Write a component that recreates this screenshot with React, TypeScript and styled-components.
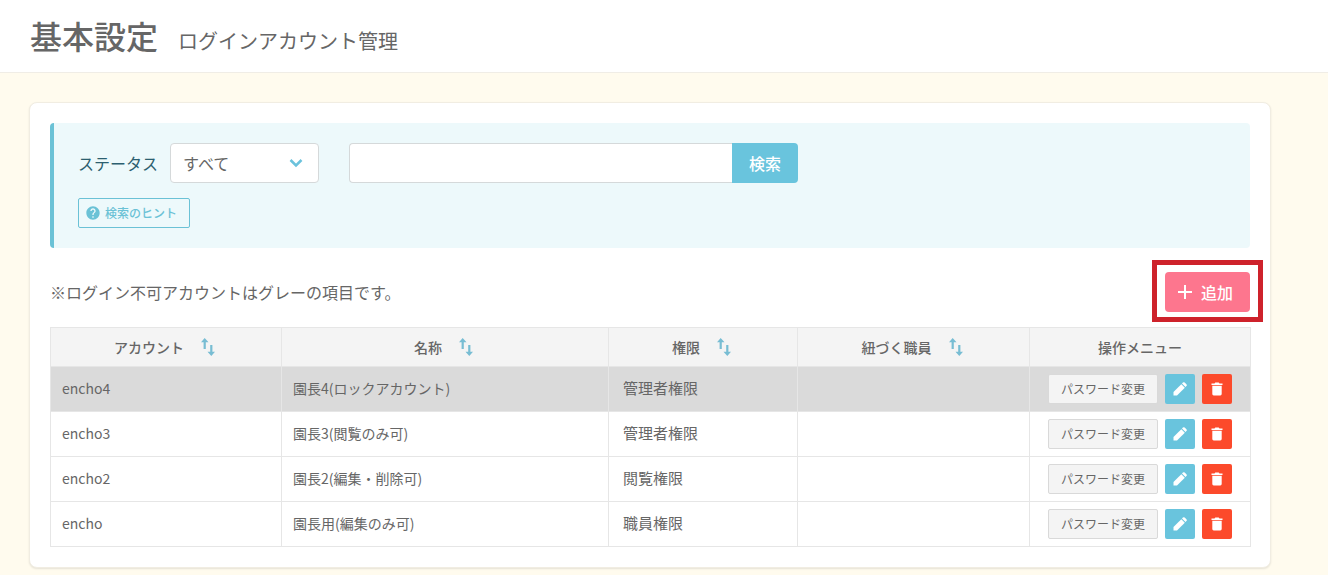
import React from "react";
import styled, { createGlobalStyle } from "styled-components";
import { MdHelp } from "react-icons/md";

const GlobalStyle = createGlobalStyle`
  *, *::before, *::after { box-sizing: border-box; }
  body {
    margin: 0;
    background: #fffbee;
    color: #666;
    font-family: "Noto Sans CJK JP", sans-serif;
    font-size: 16px;
    line-height: 24px;
  }
  button, input, select { font: inherit; color: inherit; margin: 0; }
  button { cursor: pointer; }
`;

const PageHeader = styled.header`
  display: flex;
  align-items: baseline;
  gap: 20px;
  padding: 11px 30px 13px;
  background: #fff;
  border-bottom: 1px solid #f0ede6;
`;

const Title = styled.h1`
  margin: 0;
  font-size: 32px;
  line-height: 48px;
  font-weight: 500;
`;

const Subtitle = styled.p`
  margin: 0;
  font-size: 20px;
`;

const Card = styled.main`
  max-width: 1242px;
  margin: 29px 29px 7px;
  padding: 20px;
  background: #fff;
  border: 1px solid #f1ede2;
  border-radius: 8px;
  box-shadow: 0 1px 2px rgba(0, 0, 0, 0.1);
`;

const SearchPanel = styled.form`
  display: flex;
  flex-direction: column;
  align-items: flex-start;
  gap: 15px;
  padding: 20px 24px;
  background: #edf9fb;
  border-left: 4px solid #6bc2d6;
  border-radius: 4px;
`;

const SearchRow = styled.div`
  display: flex;
  align-items: center;
`;

const StatusLabel = styled.label`
  margin-right: 12px;
  color: #2c5f70;
`;

const SelectBox = styled.div`
  display: grid;
  align-items: center;
  margin-right: 30px;

  > * { grid-area: 1 / 1; }

  svg {
    justify-self: end;
    margin-right: 16px;
    pointer-events: none;
  }
`;

const StatusSelect = styled.select`
  appearance: none;
  width: 149px;
  height: 40px;
  padding: 0 12px;
  background: #fff;
  border: 1px solid #d5d9da;
  border-radius: 4px;
`;

const KeywordInput = styled.input`
  width: 383px;
  height: 40px;
  padding: 0 12px;
  background: #fff;
  border: 1px solid #d5d9da;
  border-right: 0;
  border-radius: 4px 0 0 4px;
`;

const SearchButton = styled.button`
  width: 66px;
  height: 40px;
  padding: 0;
  border: 0;
  border-radius: 0 4px 4px 0;
  background: #69c4dd;
  color: #fff;
  font-weight: 500;
`;

const HintButton = styled.button`
  display: flex;
  align-items: center;
  gap: 4px;
  height: 30px;
  padding: 0 12px 0 6px;
  background: transparent;
  border: 1px solid #6bc2d6;
  border-radius: 2px;
  color: #6bc2d6;
  font-size: 12px;
  font-weight: 500;
`;

const NoteRow = styled.div`
  display: flex;
  align-items: center;
  justify-content: space-between;
  margin: 24px 0 15px;
`;

const Note = styled.p`
  margin: 0;
`;

const Highlight = styled.div`
  position: relative;

  &::after {
    content: "";
    position: absolute;
    inset: -12px -13px -10px;
    border: 5px solid #ce222b;
    pointer-events: none;
  }
`;

const AddButton = styled.button`
  display: flex;
  align-items: center;
  gap: 8px;
  height: 40px;
  padding: 0 17px 0 12px;
  border: 0;
  border-radius: 4px;
  background: #fd768e;
  color: #fff;
  font-weight: 500;
`;

const Table = styled.table`
  width: 100%;
  table-layout: fixed;
  border-collapse: collapse;
  font-size: 14px;
`;

const Column = styled.col<{ $width: number }>`
  width: ${({ $width }) => $width}px;
`;

const HeadCell = styled.th`
  height: 39px;
  padding: 0;
  background: #f4f4f4;
  border: 1px solid #e6e6e6;
  font-weight: 500;
`;

const HeadContent = styled.div`
  display: flex;
  align-items: center;
  justify-content: center;
  gap: 17px;
  padding-right: 3px;
`;

const SortButton = styled.button`
  display: flex;
  padding: 0;
  border: 0;
  background: none;
`;

const Row = styled.tr<{ $locked: boolean }>`
  background: ${({ $locked }) => ($locked ? "#dadada" : "#fff")};
`;

const Cell = styled.td`
  height: 45px;
  padding: 0 11px;
  border: 1px solid #e6e6e6;
`;

const TextCell = styled(Cell)`
  padding-bottom: 2px;
`;

const RoleCell = styled(TextCell)`
  padding-left: 14px;
  font-size: 15px;
`;

const Actions = styled.div`
  display: flex;
  justify-content: center;
  gap: 7px;
`;

const PasswordButton = styled.button`
  width: 110px;
  height: 30px;
  padding: 0;
  background: #f4f4f4;
  border: 1px solid #d9d9d9;
  border-radius: 2px;
  font-size: 12px;
`;

const IconButton = styled.button<{ $color: string }>`
  display: flex;
  align-items: center;
  justify-content: center;
  width: 30px;
  height: 30px;
  padding: 0;
  border: 0;
  border-radius: 2px;
  background: ${({ $color }) => $color};
  color: #fff;
`;

const SortIcon = () => (
  <svg width="14" height="18" viewBox="0 0 14 18" fill="#78bdd3" aria-hidden="true">
    <path d="M3.700 0 7.500 4.300H4.800V11H2.600V4.300H0Z" />
    <path d="M10.300 18 6.500 13.700H9.200V7H11.400V13.700H14Z" />
  </svg>
);

const ChevronIcon = () => (
  <svg width="14" height="10" viewBox="0 0 14 10" fill="none" stroke="#6bc2dc" strokeWidth="2.500" aria-hidden="true">
    <path d="m1.500 2 5.500 5.500L12.500 2" />
  </svg>
);

const PlusIcon = () => (
  <svg width="16" height="16" viewBox="0 0 16 16" stroke="#fff" strokeWidth="2" aria-hidden="true">
    <path d="M8 1v14M1 8h14" />
  </svg>
);

const PencilIcon = () => (
  <svg width="14" height="14" viewBox="0 0 14 14" fill="currentColor" aria-hidden="true">
    <path d="M.500 13.500V10L8.300 2.200l3.500 3.500L4 13.500Z" />
    <path d="m9 1.500.9-.9q.9-.9 1.800 0l1.700 1.700q.9.900 0 1.800l-.9.900Z" />
  </svg>
);

const TrashIcon = () => (
  <svg width="12" height="14" viewBox="0 0 12 14" fill="currentColor" aria-hidden="true">
    <path d="M.500 1.500H3.500L4.300.500H7.700L8.500 1.500H11.500V3H.500Z" />
    <path d="M1.300 3.800H10.700V12Q10.700 13.400 9.300 13.400H2.700Q1.300 13.400 1.300 12Z" />
  </svg>
);

const columns = [
  { label: "アカウント", width: 231 },
  { label: "名称", width: 327 },
  { label: "権限", width: 189 },
  { label: "紐づく職員", width: 232 },
];

const accounts = [
  { id: "encho4", name: "園長4(ロックアカウント)", role: "管理者権限", staff: "", locked: true },
  { id: "encho3", name: "園長3(閲覧のみ可)", role: "管理者権限", staff: "", locked: false },
  { id: "encho2", name: "園長2(編集・削除可)", role: "閲覧権限", staff: "", locked: false },
  { id: "encho", name: "園長用(編集のみ可)", role: "職員権限", staff: "", locked: false },
];

export default function App() {
  return (
    <>
      <GlobalStyle />
      <PageHeader>
        <Title>基本設定</Title>
        <Subtitle>ログインアカウント管理</Subtitle>
      </PageHeader>
      <Card>
        <SearchPanel onSubmit={(event) => event.preventDefault()}>
          <SearchRow>
            <StatusLabel htmlFor="status">ステータス</StatusLabel>
            <SelectBox>
              <StatusSelect id="status">
                <option>すべて</option>
              </StatusSelect>
              <ChevronIcon />
            </SelectBox>
            <KeywordInput type="text" aria-label="検索" />
            <SearchButton type="submit">検索</SearchButton>
          </SearchRow>
          <HintButton type="button">
            <MdHelp size={16} />
            検索のヒント
          </HintButton>
        </SearchPanel>
        <NoteRow>
          <Note>※ログイン不可アカウントはグレーの項目です。</Note>
          <Highlight>
            <AddButton type="button">
              <PlusIcon />
              追加
            </AddButton>
          </Highlight>
        </NoteRow>
        <Table>
          <colgroup>
            {columns.map((column) => (
              <Column key={column.label} $width={column.width} />
            ))}
            <Column $width={221} />
          </colgroup>
          <thead>
            <tr>
              {columns.map((column) => (
                <HeadCell key={column.label} scope="col">
                  <HeadContent>
                    {column.label}
                    <SortButton type="button" aria-label={`${column.label} 並べ替え`}>
                      <SortIcon />
                    </SortButton>
                  </HeadContent>
                </HeadCell>
              ))}
              <HeadCell scope="col">操作メニュー</HeadCell>
            </tr>
          </thead>
          <tbody>
            {accounts.map((account) => (
              <Row key={account.id} $locked={account.locked}>
                <TextCell>{account.id}</TextCell>
                <TextCell>{account.name}</TextCell>
                <RoleCell>{account.role}</RoleCell>
                <TextCell>{account.staff}</TextCell>
                <Cell>
                  <Actions>
                    <PasswordButton type="button">パスワード変更</PasswordButton>
                    <IconButton type="button" $color="#69c4dd" aria-label="編集">
                      <PencilIcon />
                    </IconButton>
                    <IconButton type="button" $color="#fc4a2b" aria-label="削除">
                      <TrashIcon />
                    </IconButton>
                  </Actions>
                </Cell>
              </Row>
            ))}
          </tbody>
        </Table>
      </Card>
    </>
  );
}
